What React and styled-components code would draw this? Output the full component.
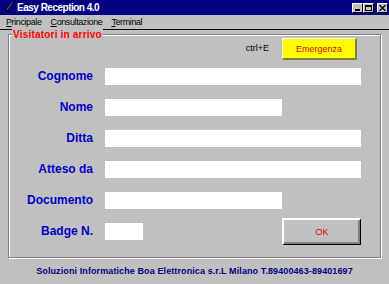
import React from "react";
import styled, { createGlobalStyle } from "styled-components";

const Global = createGlobalStyle`
  html, body { margin: 0; padding: 0; background: #c0c0c0; }
  body { font-family: "Liberation Sans", Arial, sans-serif; }
`;

const Window = styled.div`
  width: 389px;
  height: 284px;
  background: #c0c0c0;
  display: flex;
  flex-direction: column;
  overflow: hidden;
`;

const TitleBar = styled.div`
  height: 15px;
  background: #000080;
  display: flex;
  align-items: center;
  padding: 0 1px 0 3px;
`;

const AppIcon = styled.svg`
  width: 11px;
  height: 11px;
  flex: none;
`;

const Title = styled.div`
  margin-left: 3px;
  color: #fff;
  font-size: 10px;
  font-weight: bold;
  letter-spacing: -0.5px;
  flex: 1;
  line-height: 15px;
`;

const CaptionButton = styled.div`
  width: 11px;
  height: 10px;
  box-sizing: border-box;
  background: #c0c0c0;
  border: 1px solid;
  border-color: #fff #000 #000 #fff;
  margin-left: ${(p) => (p.$gap ? "3px" : "0")};
  display: flex;
  align-items: center;
  justify-content: center;
`;

const MenuBar = styled.div`
  height: 14px;
  border-bottom: 1px solid #000;
  display: flex;
  align-items: center;
  padding-left: 6px;
`;

const MenuItem = styled.span`
  font-size: 9px;
  letter-spacing: -0.4px;
  color: #000;
  margin-right: ${(p) => p.$mr}px;
  & u { text-decoration: underline; }
`;

const Main = styled.div`
  padding: 4px 7px 0 8px;
`;

const Group = styled.div`
  border: 1px solid #808080;
  box-shadow: 1px 1px 0 #fff, inset 1px 1px 0 #fff;
  height: 224px;
  box-sizing: border-box;
  margin-right: 1px;
`;

const Legend = styled.div`
  width: fit-content;
  margin: -6px 0 -3px 3px;
  padding: 0 1px;
  background: #c0c0c0;
  color: #ff0000;
  font-size: 10px;
  font-weight: bold;
  letter-spacing: 0.2px;
  line-height: 12px;
`;

const TopRow = styled.div`
  display: flex;
  align-items: center;
  justify-content: flex-end;
  padding-right: 23px;
  height: 22px;
`;

const Hotkey = styled.span`
  font-size: 9px;
  color: #000;
  margin-right: 13px;
  margin-top: -2px;
`;

const EmergencyButton = styled.div`
  width: 75px;
  height: 22px;
  box-sizing: border-box;
  background: #ffff00;
  border-top: 1px solid #fff;
  border-left: 1px solid #fff;
  border-right: 2px solid #808040;
  border-bottom: 2px solid #808040;
  color: #e00000;
  font-size: 9px;
  display: flex;
  align-items: center;
  justify-content: center;
`;

const Form = styled.div`
  display: grid;
  grid-template-columns: 84px 256px;
  column-gap: 12px;
  row-gap: 14px;
  margin-top: 8px;
`;

const Label = styled.div`
  text-align: right;
  color: #0000c8;
  font-size: 12px;
  font-weight: bold;
  line-height: 17px;
  height: 17px;
`;

const Field = styled.div`
  display: flex;
  align-items: center;
  justify-content: space-between;
  height: 17px;
`;

const Input = styled.div`
  width: ${(p) => p.$w}px;
  height: 17px;
  background: #fff;
`;

const OkButton = styled.div`
  width: 79px;
  height: 27px;
  box-sizing: border-box;
  margin: -5px 0;
  background: #c0c0c0;
  border-top: 2px solid #fff;
  border-left: 2px solid #fff;
  border-right: 1px solid #000;
  border-bottom: 1px solid #000;
  box-shadow: inset -2px -2px 0 #808080;
  color: #e00000;
  font-size: 9px;
  display: flex;
  align-items: center;
  justify-content: center;
`;

const Footer = styled.div`
  flex: 1;
  display: flex;
  align-items: center;
  justify-content: center;
  color: #000080;
  font-size: 9px;
  font-weight: bold;
  letter-spacing: 0.1px;
  padding-bottom: 1px;
`;

const rows = [
  { label: "Cognome", w: 256 },
  { label: "Nome", w: 177 },
  { label: "Ditta", w: 256 },
  { label: "Atteso da", w: 256 },
  { label: "Documento", w: 177 },
];

export default function App() {
  return (
    <>
      <Global />
      <Window>
        <TitleBar>
          <AppIcon viewBox="0 0 11 11">
            <path d="M1 6 L4 9 L10 1" stroke="#000" strokeWidth="1.6" fill="none" />
            <path d="M4 8 L9.5 0.5" stroke="#c0c0c0" strokeWidth="0.6" fill="none" />
          </AppIcon>
          <Title>Easy Reception 4.0</Title>
          <CaptionButton>
            <svg width="7" height="6" viewBox="0 0 7 6">
              <rect x="1" y="4" width="5" height="2" fill="#000" />
            </svg>
          </CaptionButton>
          <CaptionButton>
            <svg width="7" height="6" viewBox="0 0 7 6">
              <rect x="0.5" y="0.5" width="6" height="5" fill="none" stroke="#000" />
              <rect x="0" y="0" width="7" height="2" fill="#000" />
            </svg>
          </CaptionButton>
          <CaptionButton $gap>
            <svg width="7" height="6" viewBox="0 0 7 6">
              <path d="M0.5 0 L6.5 6 M6.5 0 L0.5 6" stroke="#000" strokeWidth="1.3" />
            </svg>
          </CaptionButton>
        </TitleBar>
        <MenuBar>
          <MenuItem $mr={9}><u>P</u>rincipale</MenuItem>
          <MenuItem $mr={9}><u>C</u>onsultazione</MenuItem>
          <MenuItem $mr={0}><u>T</u>erminal</MenuItem>
        </MenuBar>
        <Main>
          <Group>
            <Legend>Visitatori in arrivo</Legend>
            <TopRow>
              <Hotkey>ctrl+E</Hotkey>
              <EmergencyButton>Emergenza</EmergencyButton>
            </TopRow>
            <Form>
              {rows.map((r) => (
                <React.Fragment key={r.label}>
                  <Label>{r.label}</Label>
                  <Field>
                    <Input $w={r.w} />
                  </Field>
                </React.Fragment>
              ))}
              <Label>Badge N.</Label>
              <Field>
                <Input $w={38} />
                <OkButton>OK</OkButton>
              </Field>
            </Form>
          </Group>
        </Main>
        <Footer>Soluzioni Informatiche Boa Elettronica s.r.L Milano T.89400463-89401697</Footer>
      </Window>
    </>
  );
}
